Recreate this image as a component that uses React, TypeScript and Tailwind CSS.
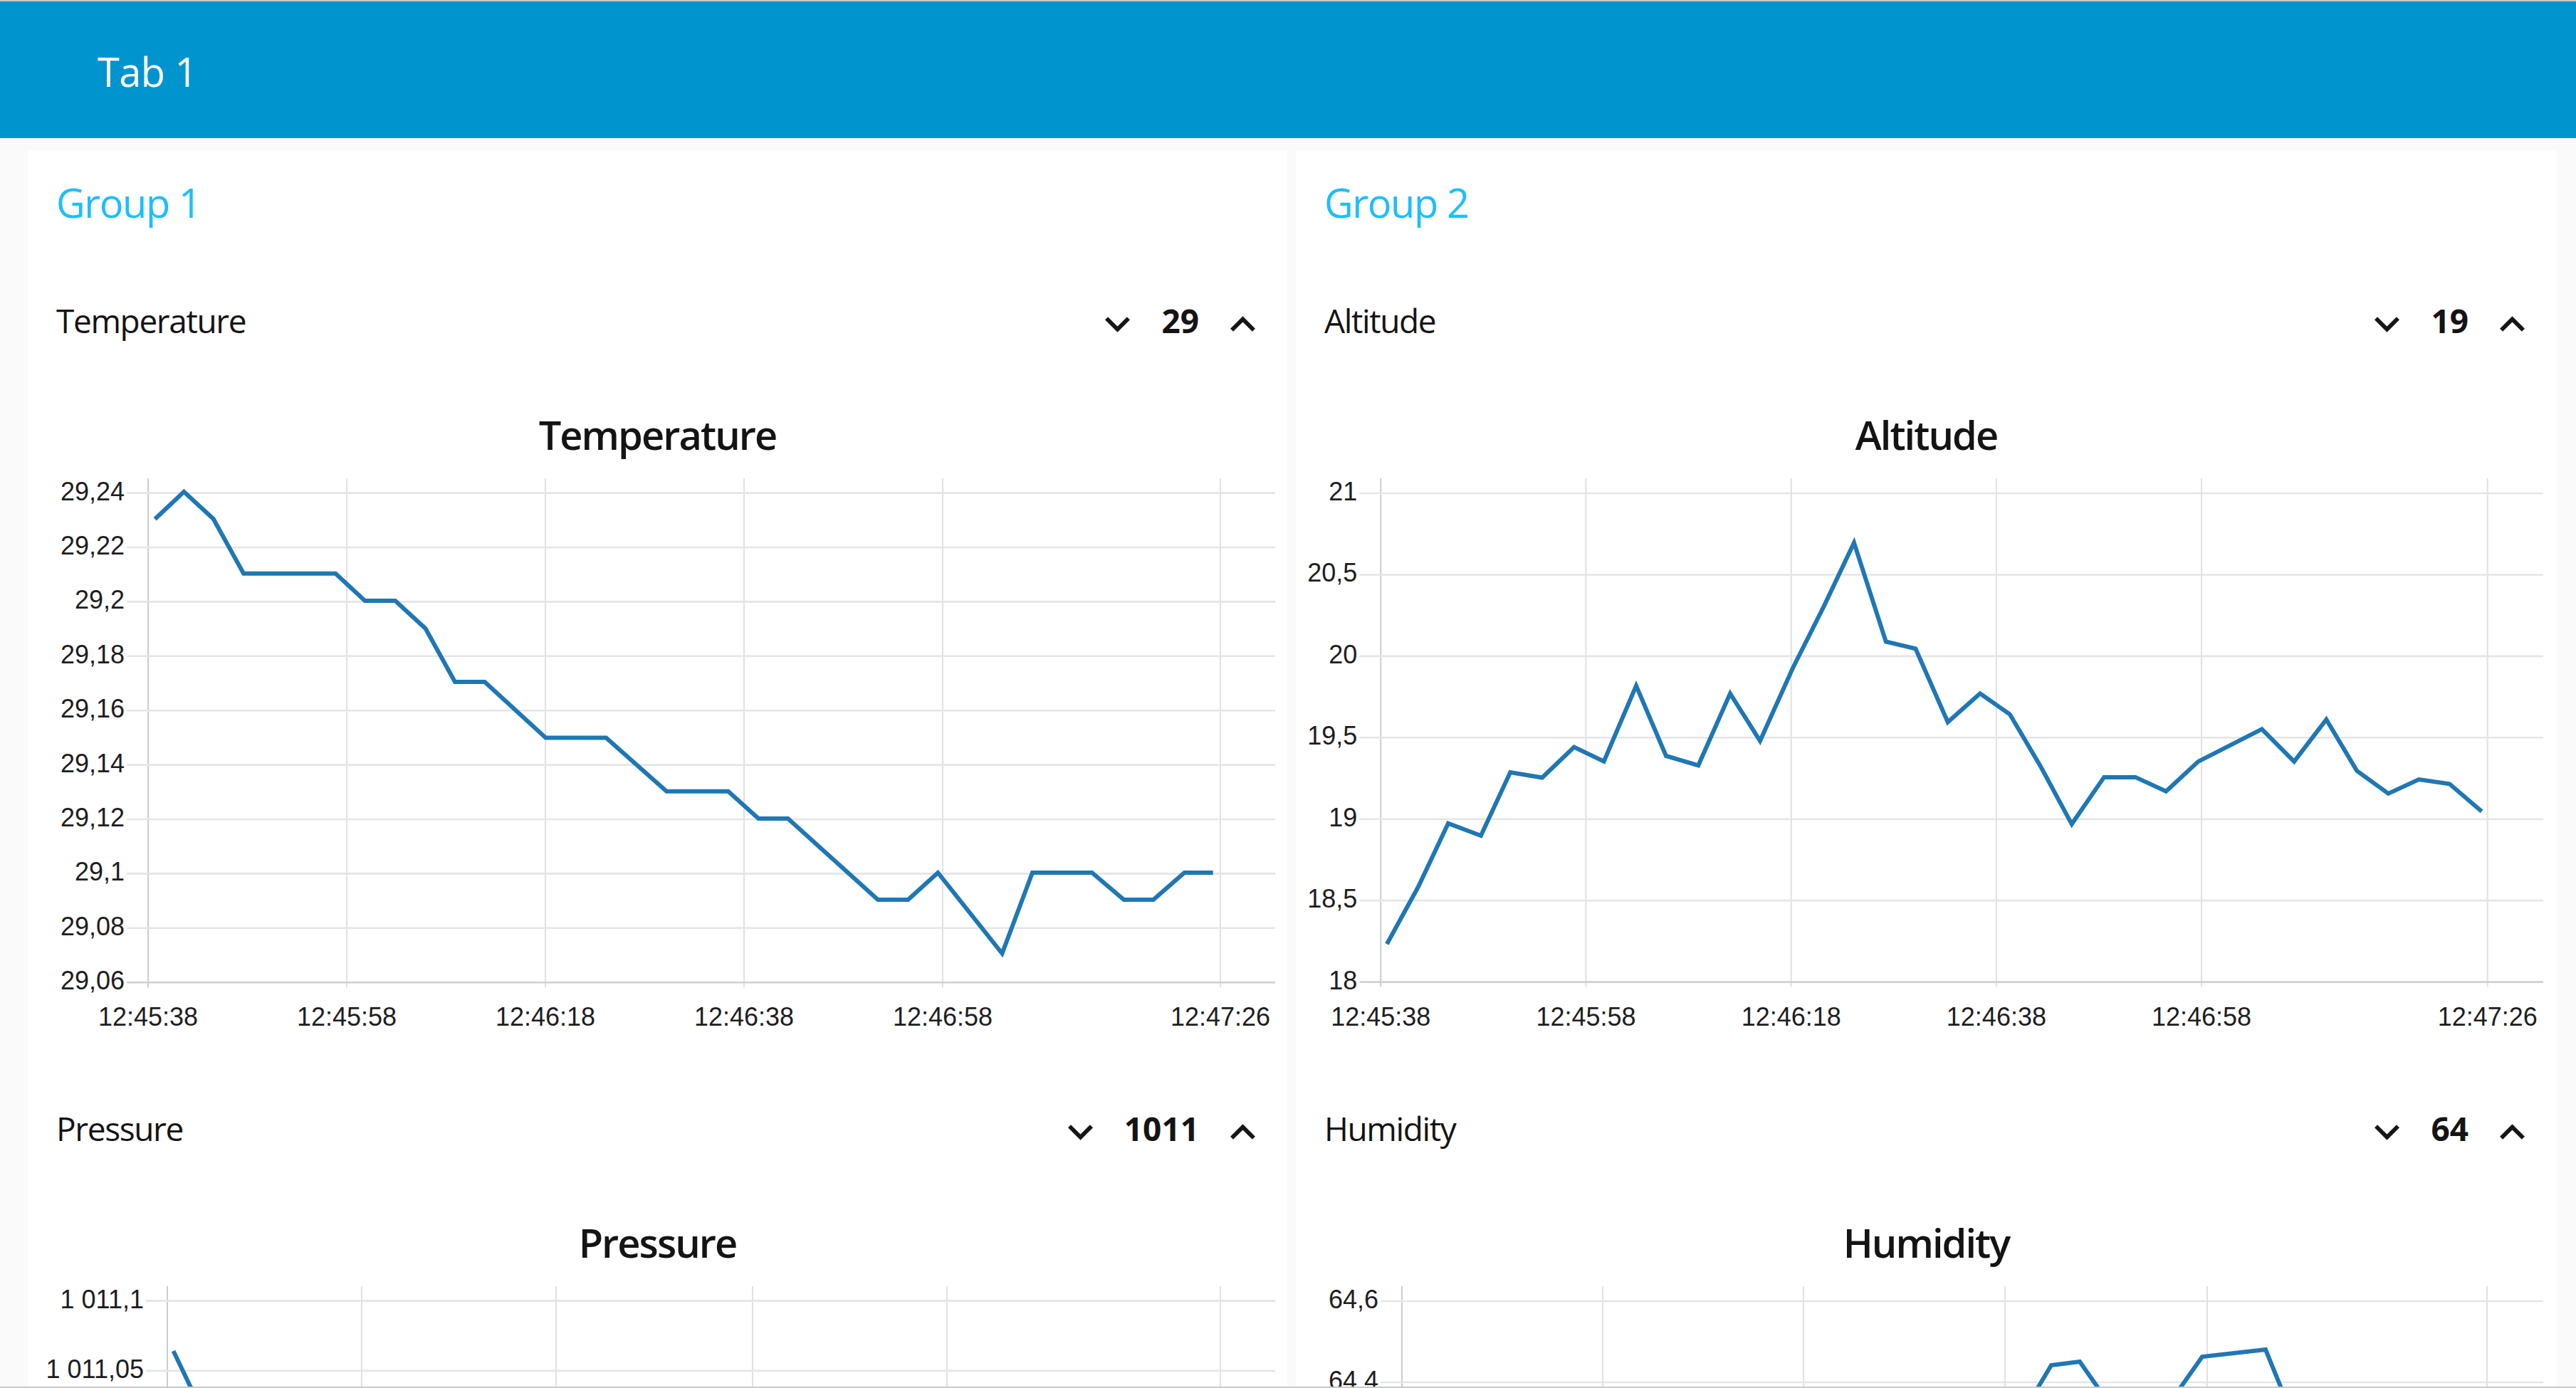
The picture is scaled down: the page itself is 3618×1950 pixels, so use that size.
import React from "react";

type Pt = [number, number];

interface Tick {
  at: number;
  label: string;
}

interface ChartSpec {
  left: number;
  width: number;
  top: number;
  axisX: number;
  rightX: number;
  gridTop: number;
  gridBottom: number;
  yTicks: Tick[];
  xTicks: Tick[];
  points: Pt[];
  showXLabels?: boolean;
}

interface Widget {
  label: string;
  value: string;
  chart: ChartSpec;
}

const CHART_H = 800;

const steps = (start: number, step: number, labels: string[]): Tick[] =>
  labels.map((label, i) => ({ at: start + i * step, label }));

const xAt = (xs: number[]): Tick[] =>
  ["12:45:38", "12:45:58", "12:46:18", "12:46:38", "12:46:58", "12:47:26"].map((label, i) => ({
    at: xs[i],
    label,
  }));

const ChevronDown = () => (
  <svg width="35" height="22" viewBox="6 8.59 12 7.41" className="mt-[12px] shrink-0" fill="#161616">
    <path d="M7.41 8.59L12 13.17l4.59-4.58L18 10l-6 6-6-6 1.41-1.41z" />
  </svg>
);

const ChevronUp = () => (
  <svg width="35" height="22" viewBox="6 8 12 7.41" className="mt-[10px] shrink-0" fill="#161616">
    <path d="M7.41 15.41L12 10.83l4.59 4.58L18 14l-6-6-6 6z" />
  </svg>
);

const LineChart = ({ spec }: { spec: ChartSpec }) => {
  const { left, width, top, axisX, rightX, gridTop, gridBottom, yTicks, xTicks, points } = spec;
  const showX = spec.showXLabels !== false;
  return (
    <svg
      className="block"
      width={width}
      height={CHART_H}
      viewBox={`${left} ${top} ${width} ${CHART_H}`}
    >
      {xTicks.map((t, i) => (
        <line
          key={"v" + i}
          x1={t.at}
          x2={t.at}
          y1={gridTop}
          y2={gridBottom + 7}
          stroke={i === 0 ? "#cccccc" : "#e1e1e1"}
          strokeWidth={2}
        />
      ))}
      {yTicks.map((t, i) => (
        <line
          key={"h" + i}
          x1={axisX - 30}
          x2={rightX}
          y1={t.at}
          y2={t.at}
          stroke={Math.abs(t.at - gridBottom) < 2 ? "#d0d0d0" : "#e5e5e5"}
          strokeWidth={2.6}
        />
      ))}
      {yTicks.map((t, i) => (
        <text
          key={"yl" + i}
          x={axisX - 33}
          y={t.at + 10}
          textAnchor="end"
          className="font-['Liberation_Sans',Arial,sans-serif] text-[36px] fill-[#1e1e1e]"
        >
          {t.label}
        </text>
      ))}
      {showX &&
        xTicks.map((t, i) => (
          <text
            key={"xl" + i}
            x={t.at}
            y={gridBottom + 61}
            textAnchor="middle"
            className="font-['Liberation_Sans',Arial,sans-serif] text-[36px] fill-[#1e1e1e]"
          >
            {t.label}
          </text>
        ))}
      <polyline
        points={points.map((p) => p.join(",")).join(" ")}
        fill="none"
        stroke="#1f77b4"
        strokeWidth={6}
        strokeLinejoin="miter"
      />
    </svg>
  );
};

const NumericRow = ({ label, value }: { label: string; value: string }) => (
  <div className="flex h-[100px] items-center pl-[40px] pr-[45px]">
    <span className="flex-1 text-[46px] leading-[100px] tracking-[-0.03em] text-[#141414]">{label}</span>
    <div className="flex items-center gap-[44px]">
      <ChevronDown />
      <span className="text-[46px] font-bold leading-[100px] text-[#141414]">{value}</span>
      <ChevronUp />
    </div>
  </div>
);

const Group = ({ title, widgets }: { title: string; widgets: Widget[] }) => (
  <section className="bg-white pt-[32px]">
    <h2 className="pl-[40px] text-[56px] font-medium leading-[80px] tracking-[-0.025em] text-[#1bbfff]">{title}</h2>
    {widgets.map((w, i) => (
      <div key={w.label} className={i === 0 ? "mt-[76px]" : "mt-[85px]"}>
        <NumericRow label={w.label} value={w.value} />
        <div className="mt-[70px] text-center text-[56px] font-semibold leading-[80px] tracking-[-0.035em] text-[#141414]">
          {w.label}
        </div>
        <LineChart spec={w.chart} />
      </div>
    ))}
  </section>
);

const group1: Widget[] = [
  {
    label: "Temperature",
    value: "29",
    chart: {
      left: 39,
      width: 1769,
      top: 650,
      axisX: 208,
      rightX: 1791,
      gridTop: 672,
      gridBottom: 1380.2,
      yTicks: steps(692.6, 76.4, ["29,24", "29,22", "29,2", "29,18", "29,16", "29,14", "29,12", "29,1", "29,08", "29,06"]),
      xTicks: xAt([208, 487, 766, 1045, 1324, 1714]),
      points: [
        [217.6, 729.3], [258.3, 690.9], [299.7, 729], [342.1, 805.7], [471.3, 805.7], [512.6, 844],
        [555.1, 844], [597.6, 883], [639, 958], [680.8, 958], [766.4, 1036.5], [851.3, 1036.5],
        [936.2, 1111.7], [1022.8, 1111.7], [1065.3, 1150], [1106.7, 1150], [1233, 1264], [1275.4, 1264],
        [1317.3, 1226], [1407.5, 1339.6], [1450, 1226], [1533.7, 1226], [1578.5, 1264], [1619.9, 1264],
        [1663.5, 1226], [1703.7, 1226],
      ],
    },
  },
  {
    label: "Pressure",
    value: "1011",
    chart: {
      left: 39,
      width: 1769,
      top: 1785,
      axisX: 235,
      rightX: 1791,
      gridTop: 1807,
      gridBottom: 2515.2,
      yTicks: steps(1827.6, 98.23, ["1 011,1", "1 011,05"]),
      xTicks: xAt([235, 508, 781, 1057, 1330, 1714]),
      points: [[243.5, 1898], [276, 1966], [300, 2100]],
      showXLabels: false,
    },
  },
];

const group2: Widget[] = [
  {
    label: "Altitude",
    value: "19",
    chart: {
      left: 1820,
      width: 1771,
      top: 650,
      axisX: 1939.3,
      rightX: 3572,
      gridTop: 672,
      gridBottom: 1379.6,
      yTicks: steps(693, 114.43, ["21", "20,5", "20", "19,5", "19", "18,5", "18"]),
      xTicks: xAt([1939.3, 2227.5, 2515.7, 2803.9, 3092, 3493.7]),
      points: [
        [1947.9, 1326.2], [1992, 1245.8], [2034, 1156.8], [2079.9, 1174], [2121.2, 1085], [2166, 1092.5],
        [2210.8, 1049.5], [2252.7, 1069.6], [2298, 963.4], [2340, 1062], [2385.3, 1075.3], [2430, 974.3],
        [2472, 1040.9], [2517.9, 938.7], [2562.1, 850.9], [2604, 762.5], [2648.8, 901.4], [2690.4, 911.4],
        [2735.7, 1014.5], [2781, 974.2], [2822.8, 1003.5], [2866.9, 1078.3], [2909.8, 1157.8],
        [2955.1, 1091.9], [2999.2, 1091.9], [3042.2, 1111.8], [3087.4, 1069.9], [3176.8, 1024.4],
        [3222.1, 1069.9], [3267.3, 1010.8], [3310.3, 1083], [3354.4, 1114.9], [3397.3, 1095],
        [3440.3, 1101.3], [3485.6, 1140],
      ],
    },
  },
  {
    label: "Humidity",
    value: "64",
    chart: {
      left: 1820,
      width: 1771,
      top: 1785,
      axisX: 1969,
      rightX: 3572,
      gridTop: 1807,
      gridBottom: 2515,
      yTicks: steps(1828, 114, ["64,6", "64,4"]),
      xTicks: xAt([1969, 2251, 2533, 2816, 3100, 3493]),
      points: [
        [2850, 1970], [2881, 1918], [2921, 1913], [2961, 1970], [3000, 2050], [3048, 1970],
        [3093, 1906], [3182, 1896], [3212, 1970], [3260, 2100],
      ],
      showXLabels: false,
    },
  },
];

export default function App() {
  return (
    <div className="h-[1950px] overflow-hidden border-y-2 border-[#c8c8c8] bg-[#fafafa] font-['Open_Sans',sans-serif]">
      <header className="flex h-[192px] items-center bg-[#0094ce] pl-[137px]">
        <span className="pt-[4px] text-[56px] leading-none tracking-[-0.01em] text-white">Tab 1</span>
      </header>
      <main className="grid grid-cols-[1769px_1771px] items-start gap-x-[12px] pl-[39px] pt-[18px]">
        <Group title="Group 1" widgets={group1} />
        <Group title="Group 2" widgets={group2} />
      </main>
    </div>
  );
}
